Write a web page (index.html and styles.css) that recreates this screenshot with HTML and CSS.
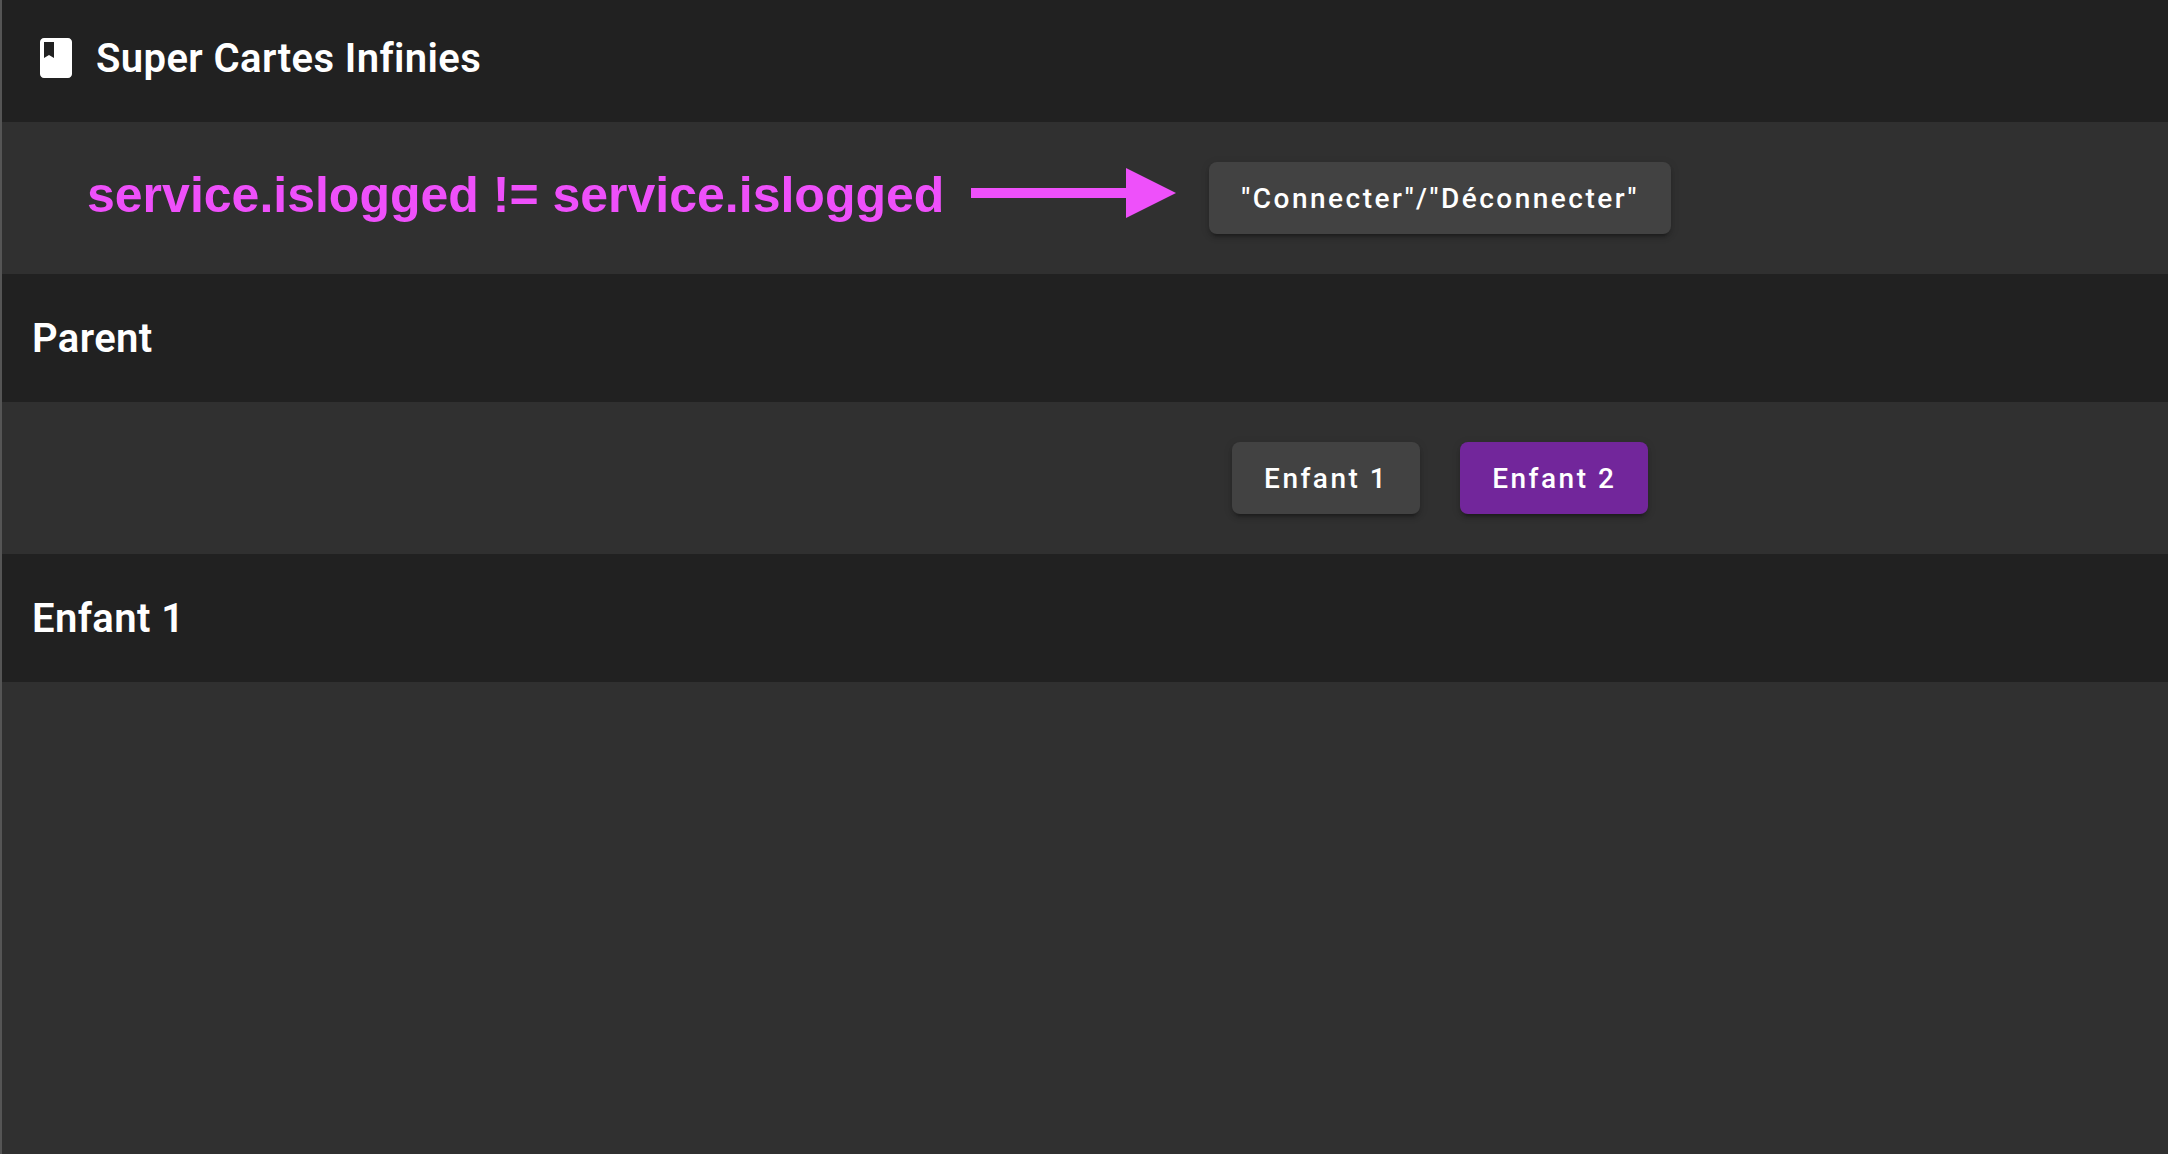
FILE: index.html
```html
<!DOCTYPE html>
<html lang="fr">
<head>
<meta charset="utf-8">
<meta name="viewport" content="width=device-width, initial-scale=1">
<title>Super Cartes Infinies</title>
<link rel="stylesheet" href="styles.css">
</head>
<body>
<header class="toolbar toolbar-main">
  <svg class="icon" viewBox="0 0 24 24" aria-hidden="true"><path d="M18 2H6c-1.100 0-2 .9-2 2v16c0 1.100.9 2 2 2h12c1.100 0 2-.9 2-2V4c0-1.100-.9-2-2-2zM6 4h5v8l-2.500-1.500L6 12V4z"/></svg>
  <h1 class="title">Super Cartes Infinies</h1>
</header>
<main>
  <div class="row row-session">
    <p class="note">service.islogged != service.islogged</p>
    <svg class="arrow" viewBox="0 0 205 50" aria-hidden="true"><path d="M0 20H155V0L205 25L155 50V30H0Z"/></svg>
    <button type="button" class="button">"Connecter"/"Déconnecter"</button>
  </div>
  <section>
    <div class="toolbar"><h2 class="title">Parent</h2></div>
    <nav class="row row-children">
      <button type="button" class="button">Enfant 1</button>
      <button type="button" class="button button-primary">Enfant 2</button>
    </nav>
    <section class="toolbar"><h3 class="title">Enfant 1</h3></section>
  </section>
</main>
</body>
</html>
```
FILE: styles.css
```css
* {
  box-sizing: border-box;
}

body {
  margin: 0;
  min-height: 100vh;
  border-left: 2px solid #555555;
  background: #303030;
  color: #ffffff;
  font-family: Roboto, "Liberation Sans", sans-serif;
}

.toolbar {
  display: flex;
  align-items: center;
  gap: 16px;
  min-height: 128px;
  padding: 0 30px;
  background: #212121;
}

.toolbar-main {
  min-height: 122px;
  padding-bottom: 6px;
}

.icon {
  width: 48px;
  height: 48px;
  fill: currentColor;
}

.title {
  margin: 0;
  padding-top: 2px;
  font-size: 40px;
  font-weight: 600;
  line-height: 64px;
  letter-spacing: 0.01em;
}

.row {
  display: flex;
  align-items: center;
  min-height: 152px;
  padding: 40px 0;
}

.row-session {
  padding-left: 85px;
}

.row-children {
  justify-content: center;
  gap: 40px;
  margin-left: 32.8%;
}

.note {
  margin: 0;
  padding-bottom: 6px;
  color: #ee50fa;
  font: bold 50px/56px "Liberation Sans", Arial, sans-serif;
  white-space: nowrap;
}

.arrow {
  flex: none;
  width: 205px;
  height: 50px;
  margin: 0 33px 10px 27px;
  fill: #ee50fa;
}

.button {
  flex: none;
  height: 72px;
  padding: 0 32px;
  border: 0;
  border-radius: 8px;
  background: #424242;
  box-shadow: 0 6px 2px -4px rgba(0, 0, 0, 0.2), 0 4px 4px rgba(0, 0, 0, 0.14), 0 2px 10px rgba(0, 0, 0, 0.12);
  color: #ffffff;
  font: 500 28px/74px Roboto, "Liberation Sans", sans-serif;
  letter-spacing: 0.0892em;
  white-space: nowrap;
  cursor: pointer;
}

.button-primary {
  background: #72269b;
}
```
